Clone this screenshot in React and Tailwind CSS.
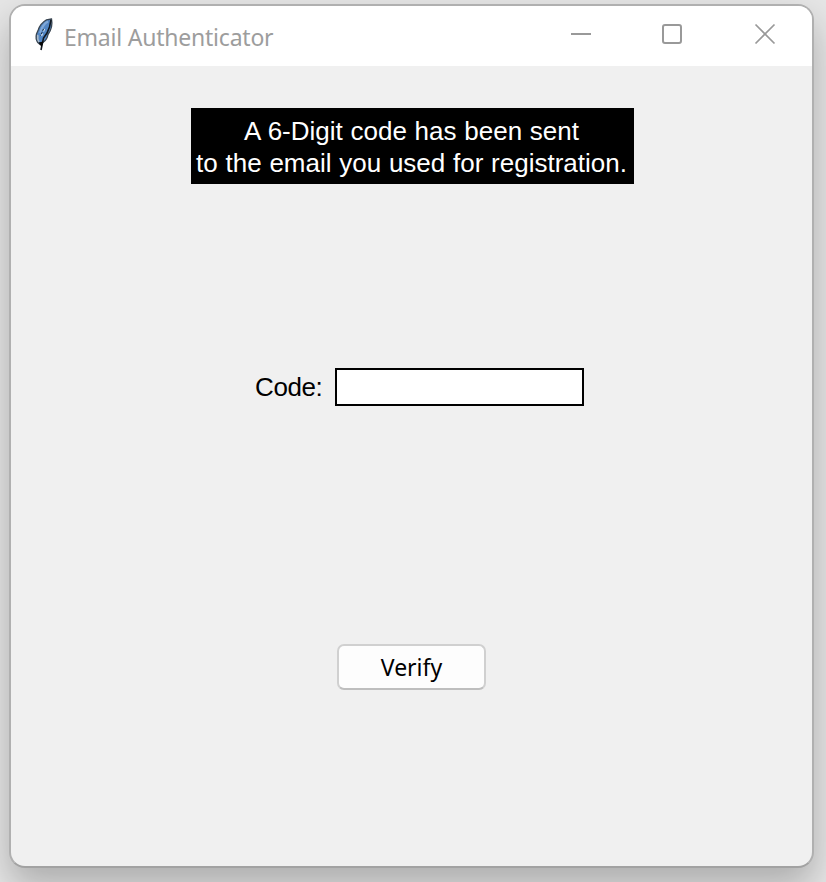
function Feather() {
  return (
    <svg width="20" height="34" viewBox="0 0 20 34" className="shrink-0">
      <path d="M17.500 1 L12.500 1.800 C8 4.500 5.500 8 4.200 12 L2.500 16 C1.700 19 2 22 3.800 24.500 L6 26.500 L9.500 24 C12.500 22 13.500 19.500 14 16.500 C17 12.500 18.500 6 17.500 1Z" fill="#5286c4" stroke="#3a4652" strokeWidth="1.300" />
      <path d="M14 3.500 C10 5.500 7.500 10 6 15" fill="none" stroke="#80a8d8" strokeWidth="2" />
      <path d="M3.800 17 C3.300 20 3.800 22 5 24" fill="none" stroke="#a9b9c8" strokeWidth="1.600" />
      <path d="M17 2 L15.500 9 L13 15 L9.500 20 L7 32" fill="none" stroke="#111820" strokeWidth="1.600" />
      <path d="M10.500 11 L9.500 13.500 M8.500 15.500 L7.500 18" fill="none" stroke="#d8e6f2" strokeWidth="1.200" />
      <path d="M9.500 11 L6.500 18" fill="none" stroke="#1c2b3c" strokeWidth="1" strokeDasharray="2 1.500" />
      <path d="M4.500 24.500 L9.500 23.500 L7.500 29Z" fill="#050505" />
    </svg>
  );
}

function WindowControls() {
  return (
    <svg width="206" height="22" viewBox="0 0 206 22" fill="none" stroke="#999" strokeWidth="2">
      <path d="M1 11H21" />
      <rect x="93" y="2" width="18" height="18" rx="2" />
      <path d="M185.500 1.500L204.500 20.500M204.500 1.500L185.500 20.500" strokeWidth="1.700" />
    </svg>
  );
}

export default function App() {
  return (
    <div className="h-[882px] w-[826px] overflow-hidden bg-[#e6e6e6] pt-1 pl-[9px] font-['Liberation_Sans',Arial,sans-serif]">
      <div className="flex h-[864px] w-[805px] flex-col overflow-hidden rounded-[16px] border-2 border-[#b0b0b0] border-b-[#a2a2a2] bg-[#f0f0f0] shadow-[0_18px_36px_rgba(0,0,0,0.25)]">
        <header className="flex h-[60px] shrink-0 items-start bg-white pl-[23px]">
          <div className="mt-3 flex">
            <Feather />
          </div>
          <h1 className="mt-[14px] ml-[10px] w-[230px] font-['Noto_Sans',sans-serif] text-[23px] leading-[34px] font-normal tracking-[-0.22px] whitespace-nowrap text-[#9d9d9d]">
            Email Authenticator
          </h1>
          <div className="mt-[17px] mr-9 ml-auto flex">
            <WindowControls />
          </div>
        </header>
        <main className="flex flex-col pt-[42px]">
          <div className="ml-[180px] flex h-[76px] w-[443px] flex-col items-center bg-black pt-[7px] pr-[2px] text-[26px] leading-[32px] whitespace-nowrap text-white [word-spacing:0.5px]">
            <span>A 6-Digit code has been sent</span>
            <span>to the email you used for registration.</span>
          </div>
          <div className="mt-[184px] ml-[244px] flex h-[38px] items-center">
            <label htmlFor="code" className="w-[80px] text-[26px] leading-[32px] tracking-[-0.4px] text-black">Code:</label>
            <input id="code" className="h-[38px] w-[249px] border-2 border-black bg-white px-1 text-[26px] outline-none" />
          </div>
          <button className="mt-[238px] ml-[326px] h-[46px] w-[149px] rounded-[7px] border-2 border-[#d0d0d0] border-b-[#bebebe] bg-[#fdfdfd] font-['Noto_Sans',sans-serif] text-[23px] leading-[32px] text-black">
            Verify
          </button>
        </main>
      </div>
    </div>
  );
}
